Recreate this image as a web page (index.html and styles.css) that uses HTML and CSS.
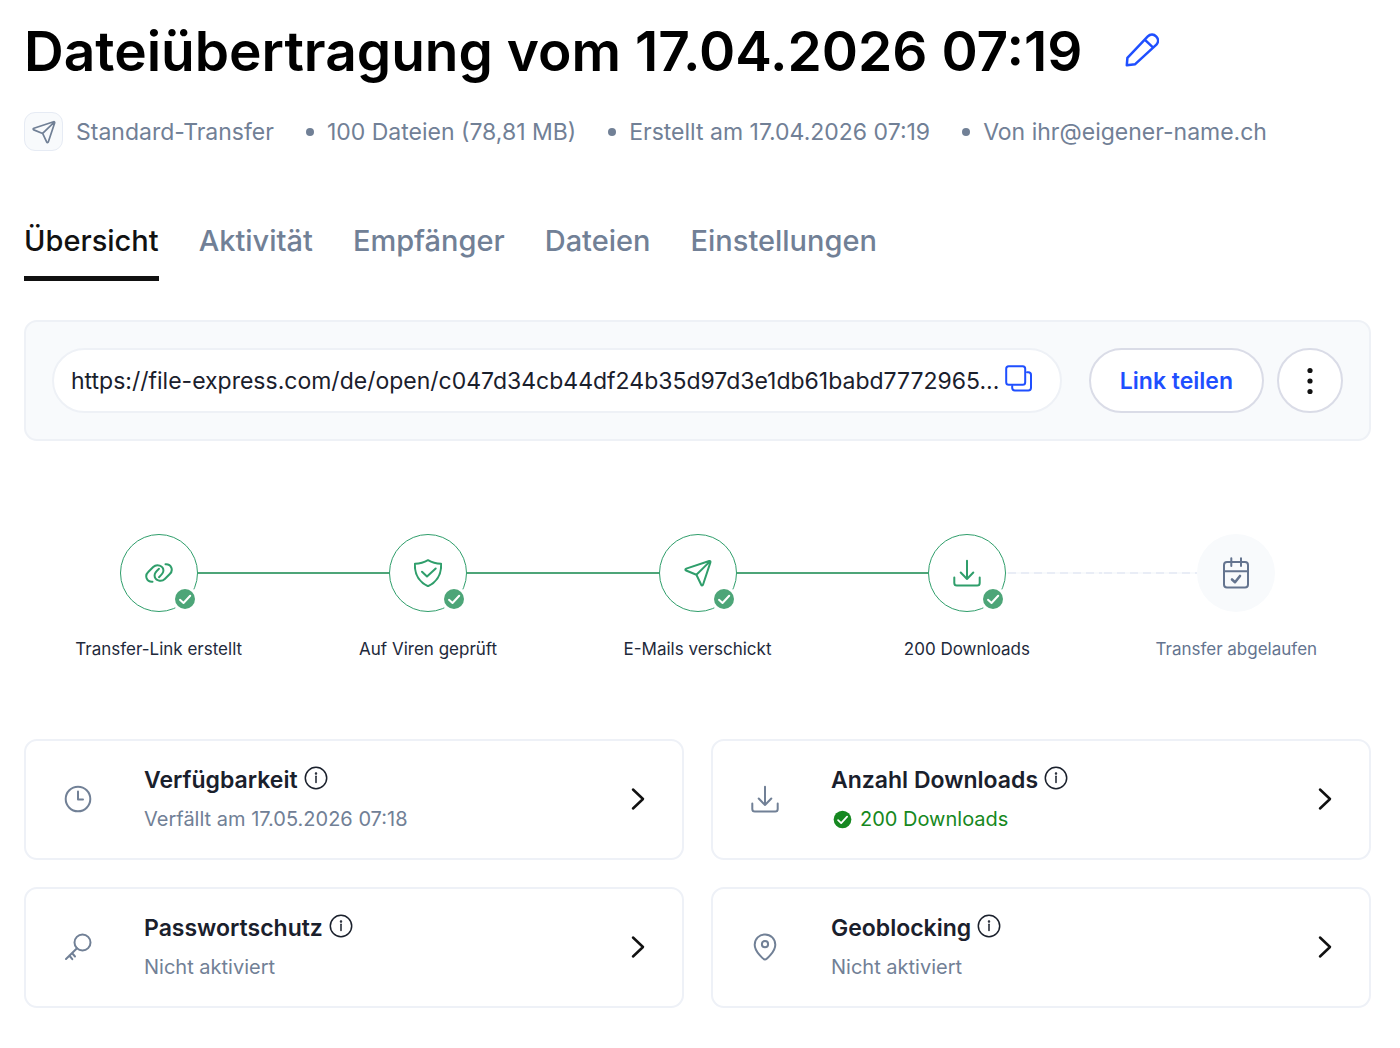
FILE: index.html
```html
<!DOCTYPE html>
<html lang="de">
<head>
    <meta charset="UTF-8">
    <meta name="viewport" content="width=device-width, initial-scale=1.0">
    <title>Dateiübertragung</title>
    <link rel="stylesheet" href="styles.css">
</head>
<body>

    <!-- Icons -->
    <svg class="sprite" width="0" height="0">
        <symbol id="send" viewBox="0 0 28 28">
            <path d="M25.2 2 2.2 9.600c-1.100.4-1.100 1.500-.1 1.900l10.300 4.200 4.800 10.100c.4.9 1.500.8 1.800-.1l7.400-22.300c.3-.9-.3-1.700-1.200-1.400zM12.400 15.700 26 2.400"/>
        </symbol>
        <symbol id="link" viewBox="0 0 28 28">
            <path id="loop" d="M7.500 22.800C1.500 23.200-.6 16.600 3.200 13l5-5c3.600-3.600 10.400-1.400 10.200 3.800-.1 2.400-1.400 3.700-4.400 6.400"/>
            <use href="#loop" transform="rotate(180 14 14)"/>
        </symbol>
        <symbol id="shield" viewBox="0 0 28 28">
            <path d="M14 1.200C10 3.600 6 4.700.9 4.800.5 14 3.500 22.400 14 27.200 24.500 22.400 27.500 14 27.100 4.800 22 4.700 18 3.600 14 1.200z"/>
            <path d="m8 12.700 5 4.800 8.700-8"/>
        </symbol>
        <symbol id="download" viewBox="0 0 28 28">
            <path d="M14 1.800V20M7.700 13.500 14 20l6.300-6.500M1.300 18.500V24q0 2.500 2.500 2.500h20.400q2.500 0 2.500-2.500v-5.500"/>
        </symbol>
        <symbol id="calendar" viewBox="0 0 28 32">
            <rect x="2" y="5" width="24" height="25.500" rx="3"/>
            <path d="M9.300 1.300V9M19 1.300V9M2 14.300h24"/>
            <path stroke-width="2.600" d="m10 22.500 3 2.700 5-6.200"/>
        </symbol>
        <symbol id="clock" viewBox="0 0 28 28">
            <circle cx="14" cy="14" r="12.300"/>
            <path d="M14 6.500v8h5"/>
        </symbol>
        <symbol id="key" viewBox="0 0 28 28">
            <circle cx="18.500" cy="9.500" r="8"/>
            <path d="M13 15.200 2 26M5.300 22.500l3 3.700M8 20l3 3.500"/>
        </symbol>
        <symbol id="pin" viewBox="0 0 28 28">
            <path d="M14 26.500C12.500 26.500 3.700 18.500 3.700 11.700a10.300 10.300 0 0 1 20.600 0C24.300 18.500 15.500 26.500 14 26.500z"/>
            <circle cx="14" cy="11.200" r="3.100"/>
        </symbol>
        <symbol id="pencil" viewBox="0 0 34 34">
            <path d="M1.800 32.300 2.400 24.800 22.800 3.400c5.500-5.500 13.700 2.600 8.600 8.300L10.200 31.200zM20 6.800l7.400 7.100"/>
        </symbol>
        <symbol id="copy" viewBox="0 0 28 28">
            <rect x="1.200" y="1.200" width="19" height="18.500" rx="2.500"/>
            <path d="M22 7.200h1.300q2.700 0 2.700 2.700v12.900q0 2.700-2.700 2.700H9.900q-2.700 0-2.700-2.700V21"/>
        </symbol>
        <symbol id="info" viewBox="0 0 24 24">
            <circle cx="12" cy="12" r="10.700"/>
            <path d="M12 10.300v6.200"/>
            <circle cx="12" cy="7.400" r=".5"/>
        </symbol>
        <symbol id="chevron" viewBox="0 0 16 24">
            <path d="m3 2.500 10 9.500L3 21.500"/>
        </symbol>
        <symbol id="check" viewBox="0 0 26 26">
            <circle class="check-ring" cx="13" cy="13" r="13"/>
            <circle class="check-fill" cx="13" cy="13" r="10"/>
            <path class="check-mark" d="m8 13.800 3.500 3.200 6.700-7.200"/>
        </symbol>
    </svg>

    <main class="page">
        <header class="title-row">
            <h1>Dateiübertragung vom 17.04.2026 07:19</h1>
            <button type="button" class="icon-button edit" aria-label="Titel bearbeiten"><svg class="icon icon-edit"><use href="#pencil"/></svg></button>
        </header>

        <ul class="meta">
            <li class="meta-type"><span class="meta-badge"><svg class="icon icon-small"><use href="#send"/></svg></span>Standard-Transfer</li>
            <li>100 Dateien (78,81 MB)</li>
            <li>Erstellt am 17.04.2026 07:19</li>
            <li>Von ihr@eigener-name.ch</li>
        </ul>

        <nav class="tabs">
            <a href="#" class="tab active">Übersicht</a>
            <a href="#" class="tab">Aktivität</a>
            <a href="#" class="tab">Empfänger</a>
            <a href="#" class="tab">Dateien</a>
            <a href="#" class="tab">Einstellungen</a>
        </nav>

        <section class="share">
            <div class="share-field">
                <input type="text" class="share-url" aria-label="Transfer-Link" readonly value="https://file-express.com/de/open/c047d34cb44df24b35d97d3e1db61babd7772965...">
                <button type="button" class="icon-button copy" aria-label="Link kopieren"><svg class="icon"><use href="#copy"/></svg></button>
            </div>
            <button type="button" class="share-button">Link teilen</button>
            <button type="button" class="more-button" aria-label="Mehr">
                <svg class="dots" viewBox="0 0 6 28"><circle cx="3" cy="3.500" r="2.600"/><circle cx="3" cy="14" r="2.600"/><circle cx="3" cy="24.500" r="2.600"/></svg>
            </button>
        </section>

        <ol class="steps">
            <li class="step">
                <div class="track">
                    <span class="line none"></span>
                    <span class="circle"><svg class="icon"><use href="#link"/></svg><svg class="step-check"><use href="#check"/></svg></span>
                    <span class="line"></span>
                </div>
                <span class="step-label">Transfer-Link erstellt</span>
            </li>
            <li class="step">
                <div class="track">
                    <span class="line"></span>
                    <span class="circle"><svg class="icon"><use href="#shield"/></svg><svg class="step-check"><use href="#check"/></svg></span>
                    <span class="line"></span>
                </div>
                <span class="step-label">Auf Viren geprüft</span>
            </li>
            <li class="step">
                <div class="track">
                    <span class="line"></span>
                    <span class="circle"><svg class="icon"><use href="#send"/></svg><svg class="step-check"><use href="#check"/></svg></span>
                    <span class="line"></span>
                </div>
                <span class="step-label">E-Mails verschickt</span>
            </li>
            <li class="step">
                <div class="track">
                    <span class="line"></span>
                    <span class="circle"><svg class="icon"><use href="#download"/></svg><svg class="step-check"><use href="#check"/></svg></span>
                    <span class="line dashed"></span>
                </div>
                <span class="step-label">200 Downloads</span>
            </li>
            <li class="step pending">
                <div class="track">
                    <span class="line dashed"></span>
                    <span class="circle"><svg class="icon icon-calendar"><use href="#calendar"/></svg></span>
                    <span class="line none"></span>
                </div>
                <span class="step-label">Transfer abgelaufen</span>
            </li>
        </ol>

        <section class="cards">
            <article class="card">
                <svg class="icon"><use href="#clock"/></svg>
                <div class="card-body">
                    <h2>Verfügbarkeit <button type="button" class="icon-button info" aria-label="Info"><svg class="icon icon-info"><use href="#info"/></svg></button></h2>
                    <p>Verfällt am 17.05.2026 07:18</p>
                </div>
                <a href="#" class="card-link" aria-label="Verfügbarkeit öffnen"><svg class="icon icon-chevron"><use href="#chevron"/></svg></a>
            </article>
            <article class="card">
                <svg class="icon"><use href="#download"/></svg>
                <div class="card-body">
                    <h2>Anzahl Downloads <button type="button" class="icon-button info" aria-label="Info"><svg class="icon icon-info"><use href="#info"/></svg></button></h2>
                    <p class="success"><svg class="card-check"><use href="#check"/></svg>200 Downloads</p>
                </div>
                <a href="#" class="card-link" aria-label="Anzahl Downloads öffnen"><svg class="icon icon-chevron"><use href="#chevron"/></svg></a>
            </article>
            <article class="card">
                <svg class="icon"><use href="#key"/></svg>
                <div class="card-body">
                    <h2>Passwortschutz <button type="button" class="icon-button info" aria-label="Info"><svg class="icon icon-info"><use href="#info"/></svg></button></h2>
                    <p>Nicht aktiviert</p>
                </div>
                <a href="#" class="card-link" aria-label="Passwortschutz öffnen"><svg class="icon icon-chevron"><use href="#chevron"/></svg></a>
            </article>
            <article class="card">
                <svg class="icon"><use href="#pin"/></svg>
                <div class="card-body">
                    <h2>Geoblocking <button type="button" class="icon-button info" aria-label="Info"><svg class="icon icon-info"><use href="#info"/></svg></button></h2>
                    <p>Nicht aktiviert</p>
                </div>
                <a href="#" class="card-link" aria-label="Geoblocking öffnen"><svg class="icon icon-chevron"><use href="#chevron"/></svg></a>
            </article>
        </section>
    </main>

</body>
</html>
```

FILE: styles.css
```css
* {
    box-sizing: border-box;
}
body {
    margin: 0;
    font-family: Inter, "Liberation Sans", sans-serif;
    color: #1e293b;
    background-color: #fff;
}
h1, h2, p, ul, ol {
    margin: 0;
    padding: 0;
}
ul, ol {
    list-style: none;
}
a {
    color: inherit;
    text-decoration: none;
}
button {
    font-family: inherit;
    cursor: pointer;
}
.sprite {
    position: absolute;
}
.page {
    padding: 19px 29px 40px 24px;
}

/* Icons */
.icon {
    display: block;
    flex: none;
    width: 28px;
    height: 28px;
    fill: none;
    stroke: currentColor;
    stroke-width: 2;
    stroke-linecap: round;
    stroke-linejoin: round;
}
.icon-small {
    width: 24px;
    height: 24px;
}
.icon-edit {
    width: 34px;
    height: 34px;
    stroke-width: 2.5;
}
.icon-calendar {
    height: 32px;
}
.icon-info {
    width: 24px;
    height: 24px;
    stroke-width: 1.5;
}
.icon-chevron {
    width: 16px;
    height: 24px;
    stroke-width: 2.5;
}
.icon-button {
    padding: 0;
    border: none;
    background: none;
    color: #1f4fff;
}

/* Titel */
.title-row {
    display: flex;
    align-items: center;
    gap: 43px;
}
h1 {
    font-size: 55px;
    line-height: 64px;
    font-weight: 600;
    color: #000;
}
.edit, .copy {
    margin-bottom: 3px;
}
.meta {
    display: flex;
    align-items: center;
    gap: 32px;
    margin-top: 29px;
    font-size: 23px;
    color: #718096;
}
.meta li {
    display: flex;
    align-items: center;
    gap: 13px;
}
.meta li + li::before {
    content: "";
    width: 8px;
    height: 8px;
    border-radius: 50%;
    background-color: #718096;
}
.meta-badge {
    display: flex;
    align-items: center;
    justify-content: center;
    width: 39px;
    height: 39px;
    border: 1px solid #e6ebf4;
    border-radius: 11px;
    background-color: #f8fafc;
}

/* Tabs */
.tabs {
    display: flex;
    gap: 40px;
    margin-top: 73px;
    font-size: 29px;
    line-height: 34px;
    font-weight: 500;
    color: #718096;
}
.tab {
    padding-bottom: 18px;
    border-bottom: 5px solid transparent;
}
.tab.active {
    color: #111;
    border-color: #111;
}

/* Link */
.share {
    display: flex;
    align-items: center;
    margin-top: 39px;
    padding: 26px;
    border: 2px solid #eef1f6;
    border-radius: 13px;
    background-color: #f8fafc;
}
.share-field {
    flex: 1;
    display: flex;
    align-items: center;
    height: 65px;
    min-width: 0;
    padding: 0 27px 0 17px;
    border: 2px solid #eef1f6;
    border-radius: 33px;
    background-color: #fff;
}
.share-url {
    flex: 1;
    min-width: 0;
    padding: 0;
    border: none;
    outline: none;
    font: 23px Inter, "Liberation Sans", sans-serif;
    color: #1a202c;
    text-overflow: ellipsis;
}
.share-button, .more-button {
    height: 65px;
    border: 2px solid #dadce7;
    border-radius: 33px;
    background-color: #fff;
}
.share-button {
    margin: 0 13px 0 27px;
    padding: 0 29px;
    font-size: 23px;
    font-weight: 600;
    color: #1f4fff;
}
.more-button {
    display: flex;
    align-items: center;
    justify-content: center;
    width: 66px;
    padding: 0;
}
.dots {
    width: 6px;
    height: 28px;
    fill: #111;
}

/* Fortschritt */
.steps {
    display: grid;
    grid-template-columns: repeat(5, 1fr);
    margin-top: 93px;
}
.step {
    text-align: center;
}
.track {
    display: flex;
    align-items: center;
    margin-bottom: 24px;
    color: #2f9e6b;
}
.line {
    flex: 1;
    height: 2px;
    background-color: #4da578;
}
.line.none {
    background: none;
}
.line.dashed {
    background: repeating-linear-gradient(90deg, #f8fafc 0 2px, #e9edf6 2px 10px, #f8fafc 10px 13px);
}
.circle {
    position: relative;
    display: flex;
    align-items: center;
    justify-content: center;
    width: 78px;
    height: 78px;
    border: 1px solid #2f9e6b;
    border-radius: 50%;
}
.step-check {
    position: absolute;
    right: -1px;
    bottom: -1px;
    width: 26px;
    height: 26px;
    color: #4da578;
}
.check-ring {
    fill: #fff;
}
.check-fill {
    fill: currentColor;
}
.check-mark {
    fill: none;
    stroke: #fff;
    stroke-width: 2;
    stroke-linecap: round;
    stroke-linejoin: round;
}
.step-label {
    font-size: 17px;
    line-height: 26px;
}
.pending, .pending .track {
    color: #64748f;
}
.pending .circle {
    border: none;
    background-color: #f8fafc;
}

/* Karten */
.cards {
    display: grid;
    grid-template-columns: 1fr 1fr;
    gap: 27px;
    margin-top: 77px;
}
.card {
    display: flex;
    align-items: center;
    padding: 18px 36px 19px 38px;
    border: 2px solid #eef1f7;
    border-radius: 13px;
    color: #718096;
}
.card-body {
    flex: 1;
    margin-left: 52px;
    padding-top: 2px;
}
.card h2 {
    display: flex;
    align-items: center;
    gap: 6px;
    font-size: 23px;
    line-height: 39px;
    font-weight: 600;
    color: #1a202c;
}
.info {
    margin-bottom: 5px;
    color: #1a202c;
}
.card p {
    font-size: 20px;
    line-height: 39px;
}
.card .success {
    display: flex;
    align-items: center;
    gap: 6px;
    color: #168821;
}
.card-check {
    width: 23px;
    height: 23px;
}
.card-link {
    color: #111;
}
```
